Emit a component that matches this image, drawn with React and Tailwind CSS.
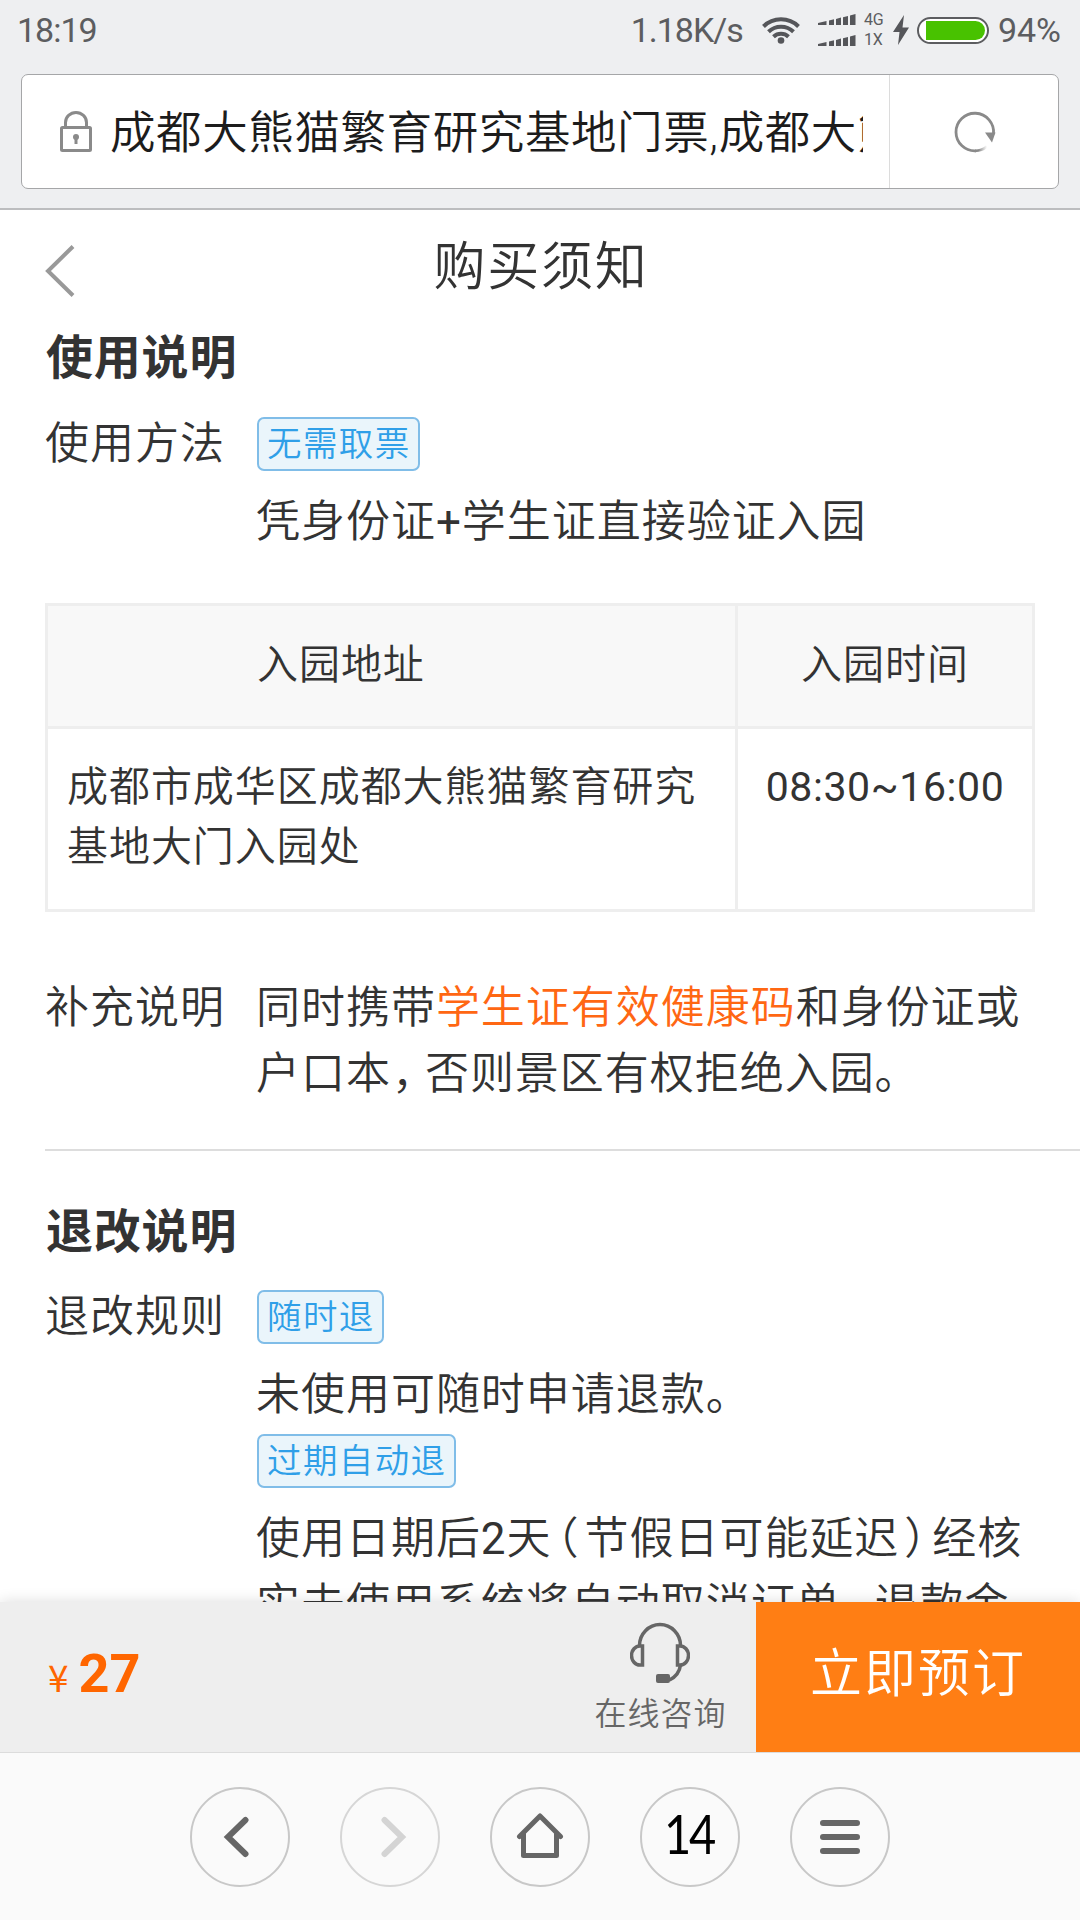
import React from 'react';

const addressRows = [
  { address: '成都市成华区成都大熊猫繁育研究基地大门入园处', time: '08:30~16:00' },
];

const SignalBars = () => (
  <svg width="38" height="12" viewBox="0 0 38 12" fill="#55565a">
    <path d="M0 9 8.5 7v4H0z" />
    <path d="M11 6.5 16 5.2V11h-5z" />
    <path d="M18 5 23 3.6V11h-5z" />
    <path d="M25 3.2 30 2V11h-5z" />
    <path d="M32 1.6 37.5 0V11H32z" />
  </svg>
);

const StatusBar = () => (
  <div className="flex h-[60px] items-center justify-between pl-[17px] pr-[19px] text-[34px] font-normal leading-none text-[#5c5d60]">
    <span className="tracking-[-1px]">18:19</span>
    <div className="flex items-center">
      <span className="tracking-[-1px]">1.18K/s</span>
      <svg className="ml-[19px]" width="38" height="28" viewBox="0 0 38 28" fill="none" stroke="#55565a" strokeWidth="4">
        <path d="M1.5 10.5a25 25 0 0 1 35 0" />
        <path d="M6.5 15.7a18 18 0 0 1 25 0" />
        <path d="M11.5 20.8a11 11 0 0 1 15 0" />
        <circle cx="19" cy="24.5" r="3.3" fill="#55565a" stroke="none" />
      </svg>
      <div className="ml-[18px] flex flex-col gap-[9px]">
        <SignalBars />
        <SignalBars />
      </div>
      <div className="ml-[8px] w-[23px] text-[16px] leading-[20px]">
        <div>4G</div>
        <div>1X</div>
      </div>
      <svg className="ml-[6px]" width="16" height="30" viewBox="0 0 16 30" fill="#55565a">
        <path d="M11 0 0 17h6.5L5 30 16 12.5H9.5z" />
      </svg>
      <div className="ml-[8px] flex h-[27px] w-[72px] items-center rounded-full border-2 border-[#5c5d60] bg-white pl-[7px]">
        <div className="h-[19px] w-[59px] rounded-l-[2px] rounded-r-full bg-[#48c200]"></div>
      </div>
      <span className="ml-[9px]">94%</span>
    </div>
  </div>
);

const AddressBar = () => (
  <div className="mx-[21px] mt-[14px] flex h-[115px] rounded-[7px] border border-[#a5a6a8] bg-white">
    <div className="flex w-[868px] items-center border-r border-[#dcdcdc] pl-[38px]">
      <svg width="32" height="41" viewBox="0 0 32 41" fill="none" stroke="#8a8a8a" strokeWidth="3">
        <path d="M5.5 16v-4.5a10.5 10 0 0 1 21 0V16" />
        <rect x="1.5" y="16.5" width="29" height="23" rx="1" />
        <circle cx="16" cy="26" r="3" fill="#8a8a8a" stroke="none" />
        <path d="M16 26v7" />
      </svg>
      <div className="ml-[18px] w-[753px] overflow-hidden whitespace-nowrap pt-[5px] text-[45.5px] leading-[70px] tracking-[0.6px] text-[#1c1c1c]">
        成都大熊猫繁育研究基地门票,成都大熊猫繁育
      </div>
    </div>
    <div className="flex flex-1 items-center justify-center pl-px">
      <svg width="42" height="42" viewBox="0 0 42 42" fill="none">
        <defs>
          <linearGradient id="fade" x1="0" y1="0" x2="1" y2="0">
            <stop offset="0.3" stopColor="#8a8a8a" />
            <stop offset="1" stopColor="#ffffff" />
          </linearGradient>
        </defs>
        <path d="M39.5 23A18.8 18.8 0 1 0 22 39.8" stroke="#8a8a8a" strokeWidth="2.8" />
        <path d="M21 39.8A18.8 18.8 0 0 0 33 35.5" stroke="url(#fade)" strokeWidth="2.8" />
        <path d="M31 21.5h10.5L38 31.5z" fill="#8a8a8a" />
      </svg>
    </div>
  </div>
);

const Tag = ({ children }) => (
  <span className="inline-flex h-[54px] items-center rounded-[7px] border-2 border-[#80bde8] bg-[#eaf5fb] pl-[8px] pr-[7px] text-[34.5px] leading-none tracking-[1.4px] text-[#2f9fe8]">
    {children}
  </span>
);

const Row = ({ label, className, children }) => (
  <div className={`flex ${className}`}>
    <div className="w-[211px] shrink-0">{label}</div>
    <div className="flex-1">{children}</div>
  </div>
);

// full-width punctuation set tighter than one em
const Punct = ({ children }) => (
  <span className="mx-[5px] [font-feature-settings:'halt']">{children}</span>
);

const Comma = () => (
  <span className="ml-px mr-[10px] [font-feature-settings:'halt']">，</span>
);

const Notice = () => (
  <main className="h-[1392px] overflow-hidden bg-white text-[44px] leading-[66px] tracking-[0.97px] text-[#333]">
    <div className="flex h-[115px] items-center pl-[45px]">
      <svg className="mt-[6px]" width="30" height="52" viewBox="0 0 30 52" fill="none" stroke="#999" strokeWidth="4">
        <path d="M28 1.5 3 26l25 24.5" />
      </svg>
      <h1 className="mr-[73px] flex-1 text-center text-[52px] tracking-[1.8px]">购买须知</h1>
    </div>

    <section className="pl-[45px]">
      <h2 className="pl-px text-[47px] font-bold tracking-[0.8px]">使用说明</h2>
      <Row label="使用方法" className="mt-[20px]">
        <div className="flex h-[66px] items-center pl-px">
          <Tag>无需取票</Tag>
        </div>
        <div className="mt-[12px]">凭身份证<span className="font-normal">+</span>学生证直接验证入园</div>
      </Row>

      <table className="mt-[48px] w-[990px] table-fixed border-collapse text-[41px] leading-[60px] tracking-[0.95px]">
        <thead>
          <tr className="h-[123px] bg-[#f8f8f8]">
            <th className="w-[690px] border-[3px] border-[#eee] pb-[3px] pl-[209px] text-left font-[350]">入园地址</th>
            <th className="border-[3px] border-[#eee] pb-[3px] font-[350]">入园时间</th>
          </tr>
        </thead>
        <tbody>
          {addressRows.map((row) => (
            <tr key={row.address} className="h-[183px]">
              <td className="border-[3px] border-[#eee] pl-[19px] pr-[10px] pt-[28px] align-top">{row.address}</td>
              <td className="border-[3px] border-[#eee] pt-[28px] text-center align-top font-normal tracking-[0.6px]">{row.time}</td>
            </tr>
          ))}
        </tbody>
      </table>

      <Row label="补充说明" className="mt-[63px]">
        同时携带<span className="text-[#ff6713]">学生证有效健康码</span>和身份证或
        <br />
        户口本<Comma />否则景区有权拒绝入园。
      </Row>
    </section>

    <section className="ml-[45px] mt-[42px] border-t-2 border-[#ddd]">
      <h2 className="mt-[48px] pl-px text-[47px] font-bold tracking-[0.8px]">退改说明</h2>
      <Row label="退改规则" className="mt-[19px]">
        <div className="flex h-[66px] items-center pl-px">
          <Tag>随时退</Tag>
        </div>
        <div className="mt-[12px]">未使用可随时申请退款。</div>
        <div className="flex h-[66px] items-center pl-px">
          <Tag>过期自动退</Tag>
        </div>
        <div className="mt-[12px] whitespace-nowrap">
          使用日期后<span className="font-normal">2</span>天<Punct>（</Punct>节假日可能延迟<Punct>）</Punct>经核
          <br />
          实未使用系统将自动取消订单<Comma />退款金
        </div>
      </Row>
    </section>
  </main>
);

const BookingBar = () => (
  <div className="relative flex h-[150px] bg-[#eee] shadow-[0_0_14px_rgba(0,0,0,0.14)]">
    <div className="flex flex-1 items-baseline pl-[48px] pt-[41px] leading-[62px] text-[#ff6600]">
      <span className="font-['Noto_Sans_CJK_SC'] text-[37px] font-normal">¥</span>
      <span className="ml-[10px] text-[54px] font-bold">27</span>
    </div>
    <div className="flex w-[192px] flex-col items-center pt-[20px] text-[32px] leading-[40px] tracking-[1px] text-[#666]">
      <svg width="60" height="63" viewBox="0 0 60 63" fill="none" stroke="#666" strokeWidth="3.5">
        <path d="M9.5 23.5a20.5 21 0 0 1 41 0" />
        <path d="M12.5 24v19H10a8.5 9.5 0 0 1 0-19z" />
        <path d="M47.5 24v19h2.5a8.5 9.5 0 0 0 0-19z" />
        <path d="M50.5 43c-1 8-5 12-11 15" />
        <rect x="26" y="52" width="14" height="9" rx="2" fill="#666" stroke="none" />
      </svg>
      <span className="mt-[9px] pl-px">在线咨询</span>
    </div>
    <button className="w-[324px] bg-[#ff7e14] pb-[4px] text-[52px] tracking-[2px] text-white">立即预订</button>
  </div>
);

const NavButton = ({ disabled, children }) => (
  <button
    disabled={disabled}
    className={`flex h-[100px] w-[100px] items-center justify-center rounded-full border-2 ${
      disabled ? 'border-[#d6d6d6] text-[#d4d4d4]' : 'border-[#c8c8c8] text-[#666]'
    }`}
  >
    {children}
  </button>
);

const NavBar = () => (
  <nav className="relative flex h-[168px] justify-center gap-[50px] border-t border-[#dcdcdc] bg-[#fafafa] pt-[34px]">
    <NavButton>
      <svg className="-ml-[8px]" width="26" height="42" viewBox="0 0 26 42" fill="none" stroke="currentColor" strokeWidth="6" strokeLinecap="round">
        <path d="M22.5 4 5 21l17.5 17" />
      </svg>
    </NavButton>
    <NavButton disabled>
      <svg className="ml-[8px]" width="26" height="42" viewBox="0 0 26 42" fill="none" stroke="currentColor" strokeWidth="6" strokeLinecap="round">
        <path d="M3.5 4 21 21 3.5 38" />
      </svg>
    </NavButton>
    <NavButton>
      <svg className="-mt-[4px]" width="48" height="46" viewBox="0 0 48 46" fill="none" stroke="currentColor" strokeWidth="5" strokeLinecap="round" strokeLinejoin="round">
        <path d="M3.5 24.5 24 4l20.5 20.5" />
        <path d="M7.5 22v21.5h33V22" />
      </svg>
    </NavButton>
    <NavButton>
      <span className="scale-x-[.87] pb-[6px] pr-[3px] font-['Lato'] text-[54px] font-normal leading-none tracking-[-2.5px] text-black">14</span>
    </NavButton>
    <NavButton>
      <div className="flex flex-col gap-[8px]">
        <div className="h-[6px] w-[40px] rounded-full bg-[#666]"></div>
        <div className="h-[6px] w-[40px] rounded-full bg-[#666]"></div>
        <div className="h-[6px] w-[40px] rounded-full bg-[#666]"></div>
      </div>
    </NavButton>
  </nav>
);

const App = () => (
  <div className="h-[1920px] w-[1080px] overflow-hidden font-[Roboto,'Noto_Sans_CJK_SC',sans-serif] font-[350]">
    <header className="h-[210px] border-b-2 border-[#bcbdbf] bg-[#eeeff1]">
      <StatusBar />
      <AddressBar />
    </header>
    <Notice />
    <BookingBar />
    <NavBar />
  </div>
);

export default App;
